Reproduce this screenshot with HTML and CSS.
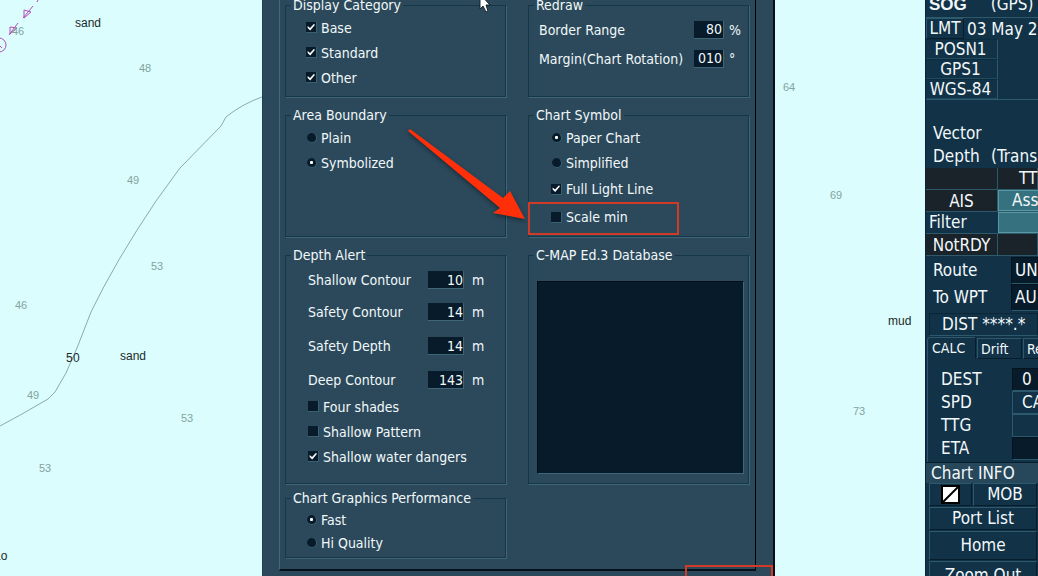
FILE: index.html
```
<!DOCTYPE html>
<html lang="en">
<head>
    <meta charset="UTF-8">
    <meta name="viewport" content="width=device-width, initial-scale=1.0">
    <title>ECDIS Chart Settings</title>
    <link rel="stylesheet" href="styles.css">
</head>
<body>

<main class="chart">
    <svg class="chart-map" width="925" height="576" aria-label="Chart">
        <path class="contour" d="M262 97 Q242 104 226 117 L221 126 L180 168 L156 201 Q115 262 91 312 L77 348 L66 373 L55 392 L48 399 L22 414 L0 426"/>
        <g class="route">
            <path d="M39 -2 L37 2 M33 6 L23 18 M18 23 L9 35"/>
            <path d="M24 10 L31 12 L24 18 Z M10 27 L17 28 L10 34 Z"/>
            <circle cx="-1" cy="45" r="7"/>
            <path d="M0 46 L2 48"/>
        </g>
        <g class="sounding">
            <text x="12" y="35">46</text>
            <text x="139" y="72">48</text>
            <text x="127" y="184">49</text>
            <text x="151" y="270">53</text>
            <text x="15" y="309">46</text>
            <text x="27" y="399">49</text>
            <text x="181" y="422">53</text>
            <text x="39" y="472">53</text>
            <text x="783" y="91">64</text>
            <text x="830" y="199">69</text>
            <text x="853" y="415">73</text>
        </g>
        <g class="contour-label">
            <text x="66" y="362">5</text>
            <text x="73" y="362">0</text>
        </g>
        <g class="seabed">
            <text x="75" y="27">sand</text>
            <text x="120" y="360">sand</text>
            <text x="888" y="325">mud</text>
            <text x="-6" y="560">Lo</text>
        </g>
    </svg>

    <form class="dialog">
        <div class="panel">
            <fieldset>
                <legend>Display Category</legend>
                <label class="option"><input type="checkbox" checked>Base</label>
                <label class="option"><input type="checkbox" checked>Standard</label>
                <label class="option"><input type="checkbox" checked>Other</label>
            </fieldset>

            <fieldset class="redraw">
                <legend>Redraw</legend>
                <div class="field">
                    <label for="borderRange">Border Range</label>
                    <input type="text" id="borderRange" value="80">
                    <span>%</span>
                </div>
                <div class="field">
                    <label for="margin">Margin(Chart Rotation)</label>
                    <input type="text" id="margin" value="010">
                    <span>°</span>
                </div>
            </fieldset>

            <fieldset>
                <legend>Area Boundary</legend>
                <label class="option"><input type="radio" name="boundary">Plain</label>
                <label class="option"><input type="radio" name="boundary" checked>Symbolized</label>
            </fieldset>

            <fieldset class="symbols">
                <legend>Chart Symbol</legend>
                <label class="option"><input type="radio" name="symbol" checked>Paper Chart</label>
                <label class="option"><input type="radio" name="symbol">Simplified</label>
                <label class="option tall"><input type="checkbox" checked>Full Light Line</label>
                <label class="option tall"><input type="checkbox">Scale min</label>
            </fieldset>

            <fieldset class="depth">
                <legend>Depth Alert</legend>
                <div class="field first">
                    <label for="shallow">Shallow Contour</label>
                    <input type="text" id="shallow" value="10">
                    <span>m</span>
                </div>
                <div class="field">
                    <label for="safety">Safety Contour</label>
                    <input type="text" id="safety" value="14">
                    <span>m</span>
                </div>
                <div class="field">
                    <label for="safetyDepth">Safety Depth</label>
                    <input type="text" id="safetyDepth" value="14">
                    <span>m</span>
                </div>
                <div class="field">
                    <label for="deep">Deep Contour</label>
                    <input type="text" id="deep" value="143">
                    <span>m</span>
                </div>
                <div class="shades">
                    <label class="option"><input type="checkbox">Four shades</label>
                    <label class="option"><input type="checkbox">Shallow Pattern</label>
                    <label class="option"><input type="checkbox" checked>Shallow water dangers</label>
                </div>
            </fieldset>

            <fieldset class="database">
                <legend>C-MAP Ed.3 Database</legend>
                <select multiple aria-label="C-MAP Ed.3 Database"></select>
            </fieldset>

            <fieldset class="performance">
                <legend>Chart Graphics Performance</legend>
                <label class="option"><input type="radio" name="graphics" checked>Fast</label>
                <label class="option"><input type="radio" name="graphics">Hi Quality</label>
            </fieldset>
        </div>
    </form>

    <!-- Callouts over the dialog -->
    <svg class="callouts" width="925" height="576" aria-hidden="true">
        <path class="arrow" d="M408 131 L410 129 L503 198 L510 191 L525 219 L493 213 L500 208 Z"/>
        <rect x="529" y="203" width="149" height="31"/>
        <rect x="686" y="566" width="86" height="30"/>
        <path class="cursor" d="M480 -6 L480 9 L483 6 L486 12 L488 11 L486 5 L490 5 Z"/>
    </svg>
</main>

<aside class="sidebar">
    <div class="speed"><b>SOG</b><span>(GPS)</span></div>
    <div class="time"><button>LMT</button><span>03 May 2</span></div>
    <div class="position">
        <button>POSN1</button>
        <button>GPS1</button>
        <button>WGS-84</button>
    </div>
    <div class="vector">
        <span>Vector</span><span></span>
        <span>Depth</span><span>(Trans</span>
    </div>
    <div class="targets">
        <span class="dark"></span><span class="dark">TT</span>
        <button class="dark">AIS</button><button class="teal">Ass</button>
        <span class="filter">Filter</span><span class="teal"></span>
        <button class="dark">NotRDY</button><span class="dark"></span>
    </div>
    <div class="pairs route-info">
        <span>Route</span><output class="sunk">UN</output>
        <span>To WPT</span><output class="sunk">AU</output>
    </div>
    <div class="dist">DIST ****.*</div>
    <nav class="tabs">
        <button class="active">CALC</button>
        <button>Drift</button>
        <button>Re</button>
    </nav>
    <div class="pairs calc">
        <span>DEST</span><output class="sunk">0</output>
        <span>SPD</span><button>CA</button>
        <span>TTG</span><output></output>
        <span>ETA</span><output class="sunk"></output>
    </div>
    <h2>Chart INFO</h2>
    <div class="actions">
        <button aria-label="Day mode">
            <svg width="19" height="19" viewBox="0 0 19 19">
                <rect x="1" y="1" width="17" height="17" fill="#fff" stroke="#000" stroke-width="2"/>
                <path d="M2 17 L17 2" stroke="#000" stroke-width="2"/>
            </svg>
        </button>
        <button>MOB</button>
        <button class="wide">Port List</button>
        <button class="wide home">Home</button>
        <button class="wide home">Zoom Out</button>
    </div>
</aside>

</body>
</html>
```
FILE: styles.css
```
* {
    box-sizing: border-box;
}
body {
    margin: 0;
    height: 100vh;
    display: grid;
    grid-template-columns: minmax(0, 1fr) 113px;
    overflow: hidden;
    background-color: #dbfdfd;
    color: #f2f8fa;
    font-family: "DejaVu Sans Condensed", "Noto Sans", sans-serif;
    font-size: 14px;
}
button, input, select {
    font: inherit;
    color: inherit;
    margin: 0;
    padding: 0;
}

/* chart */
.chart {
    position: relative;
    overflow: hidden;
}
.chart-map {
    display: block;
}
.contour {
    fill: none;
    stroke: #8fa9ab;
}
.route {
    fill: none;
    stroke: #b44cb8;
}
.sounding {
    fill: #83a3a0;
    font-family: "Liberation Sans", sans-serif;
    font-size: 11px;
}
.contour-label, .seabed {
    fill: #1d292b;
    font-family: "Liberation Sans", sans-serif;
    font-size: 12px;
}
.callouts {
    position: absolute;
    top: 0;
    left: 0;
    pointer-events: none;
}
.callouts rect {
    fill: none;
    stroke: #cf3b26;
    stroke-width: 2;
}
.arrow {
    fill: #ff2f0a;
    filter: drop-shadow(0 2px 2px rgba(0, 0, 0, 0.4));
}
.cursor {
    fill: #fff;
    stroke: #16232b;
}

/* settings dialog */
.dialog {
    position: absolute;
    top: 0;
    left: 262px;
    width: 513px;
    height: 100%;
    padding: 0 17px 0 16px;
    background-color: #2b495b;
    border-left: 1px solid #1d4054;
    border-right: 2px solid #050f17;
}
.panel {
    display: grid;
    grid-template-columns: 1fr 1fr;
    gap: 8px 22px;
    padding: 0 6px 11px 5px;
    border-left: 1px solid #3f6a7a;
    border-right: 1px solid #000;
    border-bottom: 2px solid #06121b;
}
fieldset {
    min-width: 0;
    margin: 0;
    padding: 0 0 5px 20px;
    border: 1px solid #143749;
    box-shadow: 1px 1px #3e6676;
}
fieldset:nth-child(-n+2) {
    margin-top: -5px;
    padding-bottom: 6px;
}
legend {
    margin-left: -15px;
    padding: 0 2px;
    line-height: 20px;
}
.option {
    display: flex;
    align-items: center;
    gap: 4px;
    height: 25px;
}
.option.tall {
    height: 28px;
}
.option input {
    appearance: none;
    flex: none;
    width: 11px;
    height: 11px;
    background-color: #071b2a;
    border-right: 1px solid #3a6172;
    border-bottom: 1px solid #3a6172;
}
.option input[type="radio"] {
    width: 10px;
    height: 10px;
    margin-left: 1px;
    border-radius: 50%;
}
.option input:checked::before {
    content: "";
    display: block;
    width: 8px;
    height: 8px;
    margin: 1px;
    background-color: #fff;
    clip-path: polygon(8% 38%, 38% 62%, 88% 8%, 98% 26%, 40% 94%, 8% 62%);
}
.option input[type="radio"]:checked::before {
    width: 3px;
    height: 3px;
    margin: 3px;
    clip-path: none;
    border-radius: 1px;
}
.field {
    display: grid;
    grid-template-columns: 1fr 36px 41px;
    align-items: center;
    height: 34px;
}
.field.first {
    height: 30px;
}
.field input {
    width: 100%;
    height: 18px;
    text-align: right;
    background-color: #071b2a;
    border: 0;
    border-right: 1px solid #3e6676;
    border-bottom: 1px solid #3e6676;
}
.field span {
    padding-left: 8px;
}
.redraw {
    padding-left: 10px;
}
.redraw .field {
    grid-template-columns: 1fr 30px 24px;
    height: 29px;
}
.redraw .field input {
    padding-right: 1px;
}
.redraw .field span {
    padding-left: 5px;
}
.redraw legend {
    margin-left: -5px;
}
.symbols, .depth {
    padding-left: 22px;
}
.symbols legend, .depth legend {
    margin-left: -17px;
}
.depth {
    padding-bottom: 12px;
}
.shades {
    margin-top: -3px;
}
.database {
    padding: 16px 4px 9px 8px;
}
.database legend {
    margin-left: -3px;
}
.database select {
    display: block;
    width: 100%;
    height: 193px;
    background-color: #071b2a;
    border: 1px solid #03101a;
    border-right-color: #3e6676;
    border-bottom-color: #3e6676;
    border-radius: 0;
}
.performance {
    margin-top: -4px;
    padding-bottom: 3px;
}
.performance .option {
    height: 23px;
}

/* right-hand information bar */
.sidebar {
    overflow: hidden;
    white-space: nowrap;
    background-color: #113247;
    border-left: 1px solid #0a2231;
    font-size: 17px;
}
.sidebar button {
    background-color: #113247;
    border: 1px solid #2c5a6c;
    border-right-color: #071d2b;
    border-bottom-color: #071d2b;
    overflow: hidden;
}
.speed {
    display: flex;
    gap: 24px;
    height: 17px;
    line-height: 8px;
    padding-left: 3px;
}
.speed b {
    font-family: "Liberation Sans", sans-serif;
    line-height: 10px;
}
.time {
    display: flex;
    align-items: center;
    gap: 3px;
    height: 22px;
    border-top: 1px solid #2c5a6c;
}
.time button {
    width: 38px;
    height: 21px;
    line-height: 19px;
}
.position {
    display: grid;
    grid-template-columns: 72px;
    grid-auto-rows: 20px;
    border-bottom: 1px solid #2c5a6c;
}
.sidebar .position button {
    line-height: 18px;
    padding-right: 3px;
    border-color: #0d2b3e #2c5a6c #1f4b5e #113247;
}
.vector {
    display: grid;
    grid-template-columns: 58px 1fr;
    line-height: 23px;
    padding: 22px 0 0 7px;
}
.targets {
    display: grid;
    grid-template-columns: 72px 1fr;
    grid-auto-rows: 21px;
    row-gap: 1px;
    line-height: 20px;
    background-color: #2c5a6c;
    border-bottom: 1px solid #2c5a6c;
}
.targets .dark {
    background-color: #1a222a;
    border: 0;
    border-right: 1px solid #2c5a6c;
}
.targets span.dark {
    padding-left: 21px;
}
.targets .teal {
    background-color: #35717e;
    border: 1px solid #5898a2;
    border-right: 0;
    text-align: left;
    padding-left: 13px;
    line-height: 19px;
}
.targets .filter {
    background-color: #113247;
    padding-left: 3px;
}
.pairs {
    display: grid;
    grid-template-columns: 78px 1fr;
    align-items: center;
}
.pairs output, .pairs button {
    align-self: stretch;
    padding-left: 3px;
    text-align: left;
    border: 1px solid #2c5a6c;
    border-right: 0;
}
.pairs .sunk {
    background-color: #071b2a;
    border-color: #04131e #2c5a6c #2c5a6c #04131e;
}
.route-info {
    grid-auto-rows: 27px;
    line-height: 25px;
    padding: 1px 0 2px 7px;
}
.dist {
    height: 23px;
    margin-left: 3px;
    padding-left: 12px;
    line-height: 21px;
    border: 1px solid #0a2535;
    border-bottom-color: #2c5a6c;
}
.tabs {
    display: flex;
    align-items: flex-end;
    gap: 1px;
    padding: 1px 0 0 1px;
    font-size: 14px;
}
.tabs button {
    flex: none;
    width: 45px;
    height: 21px;
    padding-left: 3px;
    text-align: left;
}
.sidebar .tabs .active {
    width: 49px;
    height: 22px;
    padding-left: 4px;
    border-bottom-color: #113247;
    border-radius: 3px 3px 0 0;
}
.calc {
    grid-template-columns: 71px 1fr;
    grid-auto-rows: 23px;
    line-height: 21px;
    margin-left: 1px;
    padding: 9px 0 2px 13px;
    border-left: 1px solid #2c5a6c;
}
.calc output, .calc button {
    padding-left: 9px;
}
.sidebar h2 {
    margin: 0;
    padding-left: 5px;
    border-top: 1px solid #071d2b;
    background-color: #27475a;
    font-size: 17px;
    font-weight: normal;
    line-height: 20px;
}
.actions {
    display: grid;
    grid-template-columns: 43px 64px;
    gap: 1px;
    padding: 0 1px 0 3px;
}
.actions button {
    height: 23px;
    line-height: 21px;
}
.actions svg {
    display: block;
    margin: 0 auto;
}
.actions .wide {
    grid-column: span 2;
}
.actions .home {
    height: 29px;
    line-height: 27px;
}
```
